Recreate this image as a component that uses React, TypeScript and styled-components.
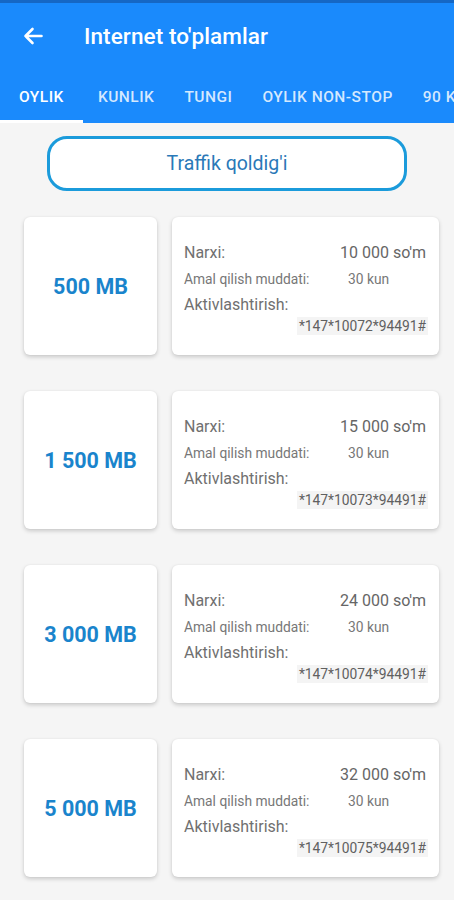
import React from 'react';
import styled, { createGlobalStyle } from 'styled-components';

type Pack = {
  size: string;
  price: string;
  days: string;
  code: string;
};

const packs: Pack[] = [
  { size: '500 MB', price: '10 000 so\'m', days: '30 kun', code: '*147*10072*94491#' },
  { size: '1 500 MB', price: '15 000 so\'m', days: '30 kun', code: '*147*10073*94491#' },
  { size: '3 000 MB', price: '24 000 so\'m', days: '30 kun', code: '*147*10074*94491#' },
  { size: '5 000 MB', price: '32 000 so\'m', days: '30 kun', code: '*147*10075*94491#' },
];

const tabs = ['OYLIK', 'KUNLIK', 'TUNGI', 'OYLIK NON-STOP', '90 KUNLIK'];

const BackArrow = () => (
  <svg width="20" height="18" viewBox="0 0 20 18" fill="none">
    <path
      d="M18.5 9H2.5M9.5 2L2.5 9l7 7"
      stroke="#fff"
      strokeWidth="2.6"
      strokeLinecap="round"
      strokeLinejoin="round"
    />
  </svg>
);

export default function App() {
  return (
    <>
      <GlobalStyle />
      <Screen>
        <AppBar>
          <Toolbar>
            <BackButton>
              <BackArrow />
            </BackButton>
            <Title>Internet to'plamlar</Title>
          </Toolbar>
          <TabRow>
            {tabs.map((t, i) => (
              <Tab key={t} active={i === 0} first={i === 0}>
                {t}
              </Tab>
            ))}
          </TabRow>
        </AppBar>

        <Content>
          <OutlineButton>Traffik qoldig'i</OutlineButton>

          <PackList>
            {packs.map((p) => (
              <PackRow key={p.code}>
                <SizeCard>{p.size}</SizeCard>
                <InfoCard>
                  <PriceLine>
                    <span>Narxi:</span>
                    <Price>{p.price}</Price>
                  </PriceLine>
                  <TermLine>
                    <TermLabel>Amal qilish muddati:</TermLabel>
                    <span>{p.days}</span>
                  </TermLine>
                  <ActivateLabel>Aktivlashtirish:</ActivateLabel>
                  <CodeLine>
                    <Code>{p.code}</Code>
                  </CodeLine>
                </InfoCard>
              </PackRow>
            ))}
          </PackList>
        </Content>
      </Screen>
    </>
  );
}

const GlobalStyle = createGlobalStyle`
  html, body {
    margin: 0;
    padding: 0;
    background: #f5f5f5;
  }
  body {
    font-family: Roboto, "Noto Sans", Arial, sans-serif;
  }
`;

const Screen = styled.div`
  width: 454px;
  min-height: 900px;
  background: #f5f5f5;
  overflow: hidden;
`;

const AppBar = styled.header`
  background: #1a8afc;
  border-top: 3px solid #1567c4;
`;

const Toolbar = styled.div`
  display: flex;
  align-items: center;
  height: 67px;
  padding-left: 23px;
  box-sizing: border-box;
`;

const BackButton = styled.div`
  display: flex;
  align-items: center;
  width: 20px;
  height: 20px;
  margin-right: 41px;
  margin-top: -2px;
`;

const Title = styled.h1`
  margin: 0;
  margin-top: -2px;
  color: #fff;
  font-size: 22.5px;
  font-weight: 500;
  letter-spacing: 0.1px;
`;

const TabRow = styled.nav`
  display: flex;
  height: 53px;
  white-space: nowrap;
  overflow: hidden;
`;

// last tab runs off the right edge, as in the app
const Tab = styled.div<{ active?: boolean; first?: boolean }>`
  display: flex;
  align-items: center;
  padding: 0 ${(p) => (p.first ? '19px' : '15px')};
  box-sizing: border-box;
  color: ${(p) => (p.active ? '#fff' : 'rgba(255,255,255,0.82)')};
  font-size: 15.5px;
  font-weight: 500;
  letter-spacing: 0.5px;
  border-bottom: 3px solid ${(p) => (p.active ? '#fff' : 'transparent')};
  padding-top: 3px;
  flex-shrink: 0;
`;

const Content = styled.main`
  display: flex;
  flex-direction: column;
  padding-top: 13px;
`;

const OutlineButton = styled.div`
  display: flex;
  align-items: center;
  justify-content: center;
  width: 360px;
  height: 55px;
  margin-left: 47px;
  box-sizing: border-box;
  border: 3px solid #1b9bdb;
  border-radius: 20px;
  color: #2a79b8;
  font-size: 19.5px;
  background: #fff;
`;

const PackList = styled.div`
  display: flex;
  flex-direction: column;
  gap: 36px;
  padding: 26px 15px 0 24px;
`;

const PackRow = styled.div`
  display: flex;
  gap: 15px;
  height: 138px;
`;

const Card = styled.div`
  background: #fff;
  border-radius: 6px;
  box-shadow: 0 2px 4px rgba(0, 0, 0, 0.18), 0 0 2px rgba(0, 0, 0, 0.06);
`;

const SizeCard = styled(Card)`
  display: flex;
  align-items: center;
  justify-content: center;
  width: 133px;
  flex-shrink: 0;
  color: #1a84cc;
  font-size: 21.5px;
  font-weight: 700;
`;

const InfoCard = styled(Card)`
  flex: 1;
  display: flex;
  flex-direction: column;
  justify-content: center;
  padding: 2px 13px 0 12px;
  color: #707070;
`;

const PriceLine = styled.div`
  display: flex;
  justify-content: space-between;
  align-items: center;
  height: 28px;
  font-size: 16px;
`;

const Price = styled.span`
  color: #666;
`;

const TermLine = styled.div`
  display: flex;
  align-items: center;
  height: 26px;
  font-size: 13.8px;
  color: #777;
`;

const TermLabel = styled.span`
  width: 164px;
`;

const ActivateLabel = styled.div`
  display: flex;
  align-items: center;
  height: 24px;
  font-size: 16px;
`;

const CodeLine = styled.div`
  display: flex;
  justify-content: flex-end;
  align-items: center;
  height: 20px;
  margin-right: -2px;
`;

const Code = styled.span`
  padding: 1px 2px;
  background: #f4f4f4;
  color: #606060;
  font-size: 13.8px;
`;
